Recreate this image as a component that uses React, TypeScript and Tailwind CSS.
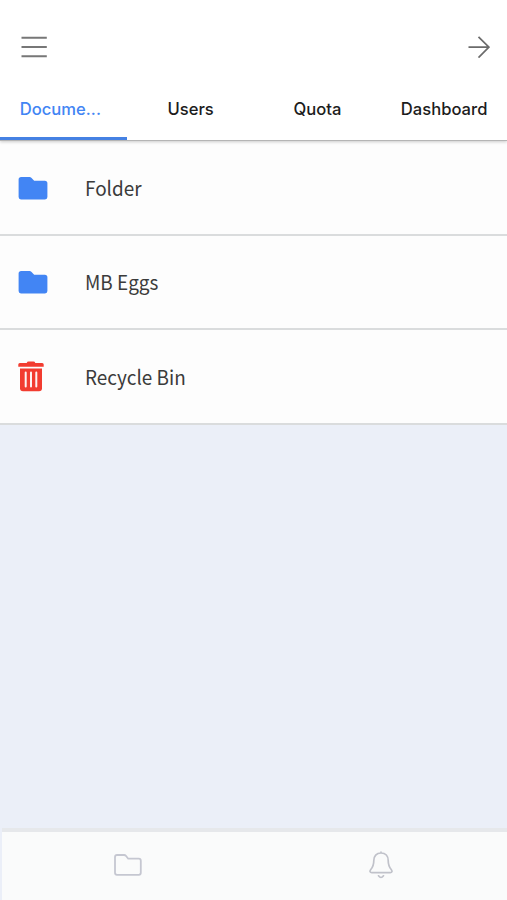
import { useState } from 'react';
import clsx from 'clsx';

const tabs = [
  { id: 'documents', label: 'Docume...' },
  { id: 'users', label: 'Users' },
  { id: 'quota', label: 'Quota' },
  { id: 'dashboard', label: 'Dashboard' },
];

const items = [
  { name: 'Folder', type: 'folder' },
  { name: 'MB Eggs', type: 'folder' },
  { name: 'Recycle Bin', type: 'bin' },
];

function FolderIcon() {
  return (
    <svg width="30" height="24" viewBox="0 0 30 24" fill="#4285f4">
      <path d="M3.2 1H11.6Q12.6 1 13.3 1.8L16.2 4.7H26.8Q29.4 4.7 29.4 7.3V21Q29.4 23.4 27 23.4H3Q.6 23.4 .6 21V3.6Q.6 1 3.2 1Z" />
    </svg>
  );
}

function BinIcon() {
  return (
    <svg width="26" height="31" viewBox="0 0 26 31">
      <g fill="#f23c30">
        <path d="M8.7 1.9Q9.2.5 10.5.5H15.5Q16.8.5 17.3 1.9H24.2Q25.7 1.9 25.7 3.4V5.7H.3V3.4Q.3 1.9 1.8 1.9Z" />
        <path d="M2 7.5H24V27.3Q24 30.3 21 30.3H5Q2 30.3 2 27.3Z" />
      </g>
      <path d="M7.7 11.5V25.5M13 11.5V25.5M18.3 11.5V25.5" stroke="#fdf3f2" strokeWidth="2" strokeLinecap="round" />
    </svg>
  );
}

export default function App() {
  const [active, setActive] = useState('documents');

  return (
    <div className="flex h-screen flex-col overflow-hidden bg-[#ebeff8]">
      <header className="relative z-10 h-[141px] shrink-0 border-b border-[#b5b5b5] bg-white shadow-[0_1px_3px_rgba(0,0,0,0.2)]">
        <div className="flex h-[94px] items-center justify-between pr-[17px] pl-[21px]">
          <button aria-label="Menu">
            <svg width="26" height="22" viewBox="0 0 26 22" stroke="#777" strokeWidth="2.1">
              <path d="M.5 1.7H25.8M.5 11H25.8M.5 20.3H25.8" />
            </svg>
          </button>
          <button aria-label="Next">
            <svg width="22" height="22" viewBox="0 0 22 22" fill="none" stroke="#6b6b6b" strokeWidth="1.7">
              <path d="M.5 11.2H20.8M10.5 .8L20.9 11.2L10.5 21.6" />
            </svg>
          </button>
        </div>
        <nav className="grid h-[46px] grid-cols-4 font-['Inter',sans-serif] text-[16.6px] font-medium">
          {tabs.map(tab => (
            <button
              key={tab.id}
              onClick={() => setActive(tab.id)}
              className={clsx(
                'border-b-[3px] pb-[13px] pl-px',
                active === tab.id ? 'border-[#4581e3] pr-[7px] text-[#4285f4]' : 'border-transparent text-[#1c1c1c]'
              )}
            >
              {tab.label}
            </button>
          ))}
        </nav>
      </header>

      <main className="flex-1">
        {items.map(item => (
          <div
            key={item.name}
            className="flex h-[94.5px] items-center border-b-2 border-[#dadcdd] bg-[#fdfdfd] pt-px pl-[18px]"
          >
            <div className="w-[67px]">{item.type === 'bin' ? <BinIcon /> : <FolderIcon />}</div>
            <span className="origin-left scale-x-[0.945] font-['Noto_Sans_CJK_SC',sans-serif] text-[20px] text-[#3b3b3b]">
              {item.name}
            </span>
          </div>
        ))}
      </main>

      <footer className="ml-[2px] grid h-[72px] grid-cols-2 items-center justify-items-center border-t-4 border-[#e6e8eb] bg-[#fafbfb] pb-[3px]">
        <button aria-label="Files">
          <svg width="28" height="22" viewBox="0 0 28 22" fill="none" stroke="#c5c7d1" strokeWidth="1.8">
            <path d="M3 1H10.2Q11.2 1 11.9 1.8L14.2 4.7H24.8Q26.8 4.7 26.8 6.7V18.8Q26.8 20.8 24.8 20.8H3Q1 20.8 1 18.8V3Q1 1 3 1Z" />
          </svg>
        </button>
        <button aria-label="Notifications">
          <svg width="24" height="28" viewBox="0 0 24 28" fill="none" stroke="#c0c2ca" strokeWidth="1.7" strokeLinecap="round">
            <path d="M12 1V2M12 2C7.4 2 4.8 5.3 4.8 9.6C4.8 14.5 4 16 1.8 18.5C.4 20.2 1 21.6 2.8 21.6H21.2C23 21.6 23.6 20.2 22.2 18.5C20 16 19.2 14.5 19.2 9.6C19.2 5.3 16.6 2 12 2Z" />
            <path d="M9.5 24.8Q12 28.2 14.5 24.8" />
          </svg>
        </button>
      </footer>
    </div>
  );
}
